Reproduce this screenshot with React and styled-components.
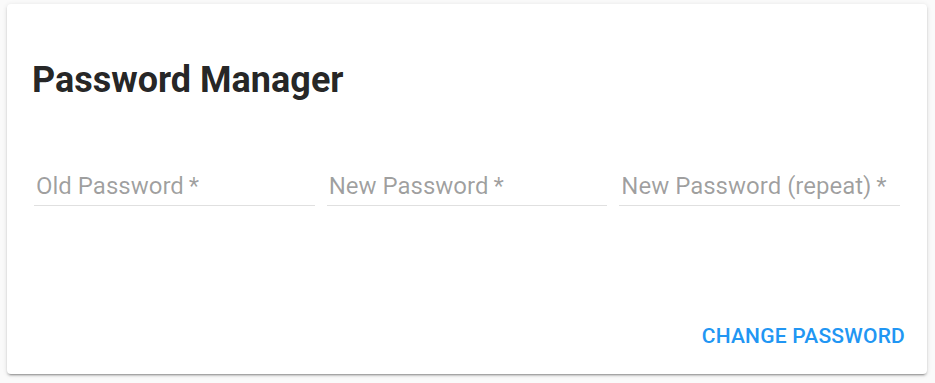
import React from 'react'
import styled, { createGlobalStyle } from 'styled-components'

const GlobalStyle = createGlobalStyle`
  html, body {
    margin: 0;
    padding: 0;
    background: #fafafa;
    font-family: Roboto, "Liberation Sans", sans-serif;
  }
`

const Page = styled.div`
  padding: 4px 8px 9px 7px;
`

const Card = styled.div`
  display: flex;
  flex-direction: column;
  height: 370px;
  box-sizing: border-box;
  padding: 54px 27px 20px 27px;
  background: #fff;
  border-radius: 4px;
  box-shadow: 0px 3px 1px -2px rgba(0, 0, 0, 0.2), 0px 2px 2px 0px rgba(0, 0, 0, 0.14),
    0px 1px 5px 0px rgba(0, 0, 0, 0.12);
`

const Title = styled.h2`
  margin: 0 0 0 -2px;
  font-size: 36px;
  line-height: 44px;
  font-weight: 700;
  color: rgba(0, 0, 0, 0.87);
`

const Fields = styled.div`
  display: grid;
  grid-template-columns: repeat(3, 1fr);
  column-gap: 12px;
  margin-top: 69px;
`

const Field = styled.label`
  display: block;
  padding: 1px 0 5px 2px;
  border-bottom: 1px solid #e0e0e0;
  font-size: 24px;
  line-height: 28px;
  color: rgba(0, 0, 0, 0.38);
`

const Actions = styled.div`
  display: flex;
  justify-content: flex-end;
  margin: auto -5px 0 0;
`

const TextButton = styled.button`
  padding: 6px 0;
  border: none;
  background: none;
  font-family: inherit;
  font-size: 21px;
  line-height: 24px;
  font-weight: 500;
  letter-spacing: 0.01em;
  text-transform: uppercase;
  color: #2196f3;
  cursor: pointer;
`

const fields = ['Old Password', 'New Password', 'New Password (repeat)']

export default function App() {
  return (
    <Page>
      <GlobalStyle />
      <Card>
        <Title>Password Manager</Title>
        <Fields>
          {fields.map((label) => (
            <Field key={label}>{label}&thinsp;*</Field>
          ))}
        </Fields>
        <Actions>
          <TextButton>Change Password</TextButton>
        </Actions>
      </Card>
    </Page>
  )
}
